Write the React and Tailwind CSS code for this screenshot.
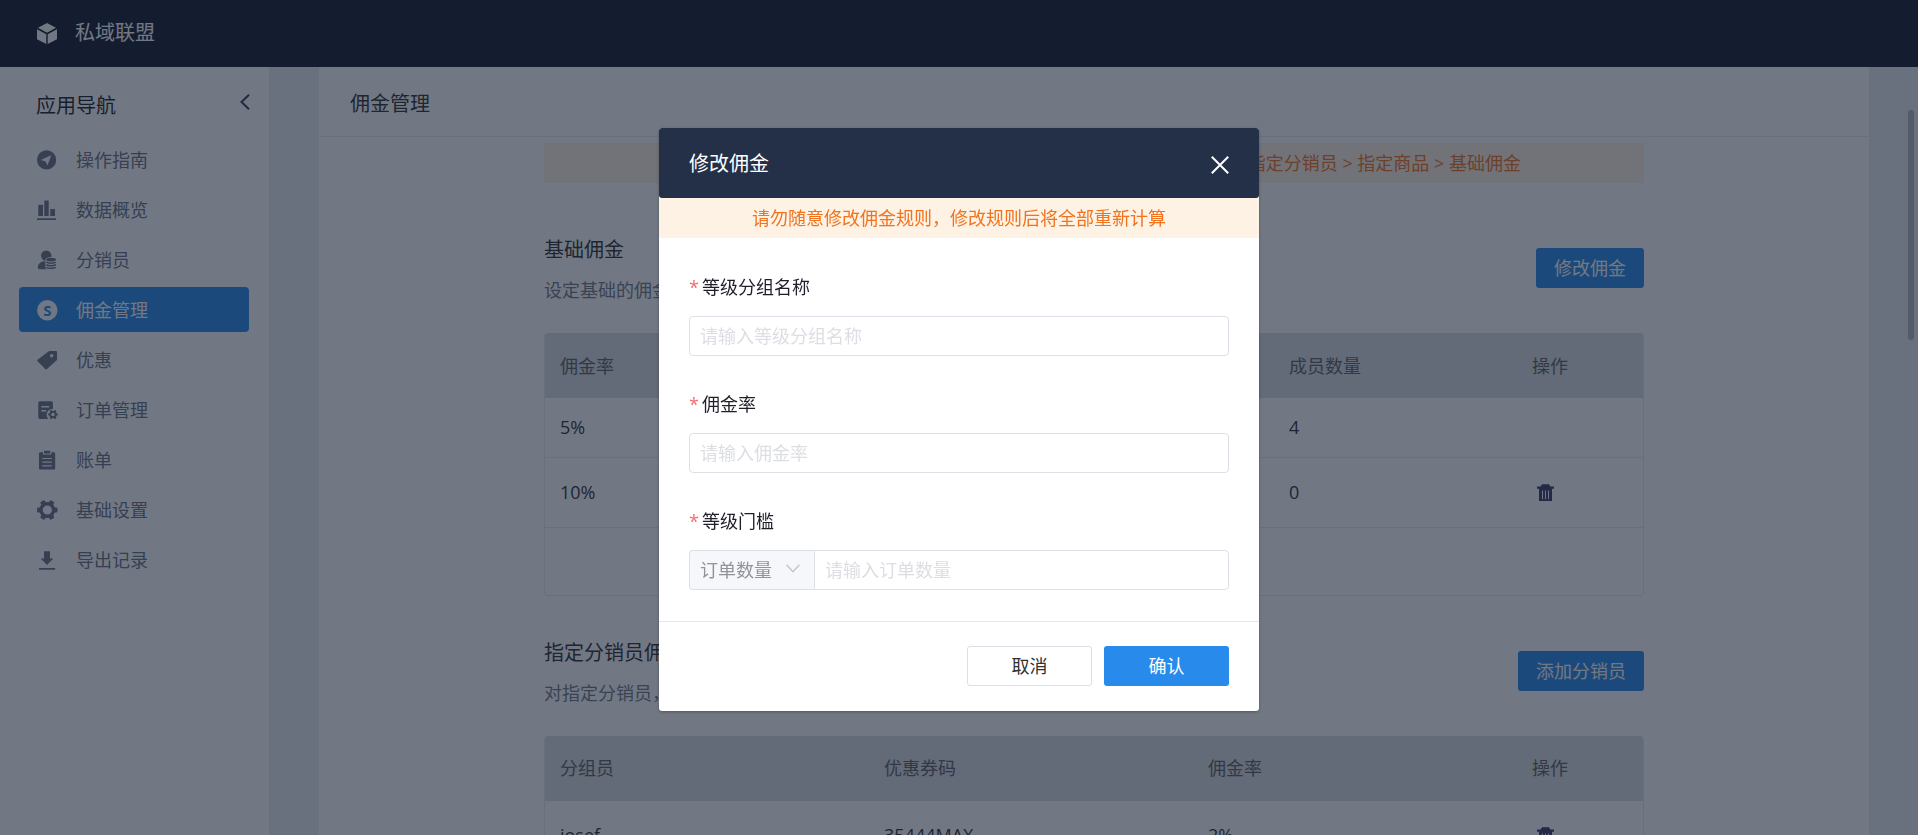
import { useState } from "react";

const icons = {
  guide: (
    <path
      fillRule="evenodd"
      d="M9.6 0.3a9.6 9.6 0 1 0 0 19.2 9.6 9.6 0 0 0 0-19.2zM14.3 5.2 10.4 15.6 8.6 11.6 3.8 10z"
    />
  ),
  chart: (
    <path d="M1.3 4.7H6V16H1.3zM7.3 .4h4.4V16H7.3zM13.3 9H18v7h-4.7zM0 18.2h19V20H0z" />
  ),
  member: (
    <>
      <circle cx="9.2" cy="5.6" r="5.2" />
      <path d="M.8 17.6c0-3.6 2.6-6.2 6.6-6.4h3v8.1H2.3C1.2 19.3.8 18.6.8 17.6z" />
      <path d="M8.4 9.8c0-3.8 11.4-3.8 11.4 0v7.4c0 3.8-11.4 3.8-11.4 0z" fill="#fff" />
      <ellipse cx="14.1" cy="9.6" rx="4.9" ry="1.9" />
      <path
        d="M9.4 12c1.5 1.5 7.9 1.5 9.4 0M9.4 14.6c1.5 1.5 7.9 1.5 9.4 0M9.4 17.2c1.5 1.5 7.9 1.5 9.4 0"
        fill="none"
        stroke="currentColor"
        strokeWidth="1.5"
      />
    </>
  ),
  commission: (
    <>
      <circle cx="10.3" cy="10.3" r="10.2" />
      <text
        x="10.3"
        y="15.6"
        textAnchor="middle"
        className="fill-[#288bec] font-['Noto_Sans'] text-[15px] font-bold"
      >
        S
      </text>
    </>
  ),
  tag: (
    <path
      fillRule="evenodd"
      d="M12.6 1h6.2c.7 0 1.2.5 1.2 1.2v7.2c0 .5-.2.9-.6 1.2L9.7 19.2c-.5.4-1.1.4-1.5-.1L.6 11.2c-.5-.5-.5-1.1 0-1.5L11.4 1.5c.3-.3.7-.5 1.2-.5zM14.7 4a1.7 1.7 0 1 0 0 3.4 1.7 1.7 0 0 0 0-3.4z"
    />
  ),
  order: (
    <>
      <path
        fillRule="evenodd"
        d="M3 1.3h11.2c1 0 1.7.7 1.7 1.7v5.9c-3.6 0-6.2 2.4-6.2 5.6 0 2 .7 3.4 1.5 4.5H3c-1 0-1.7-.7-1.7-1.7V3c0-1 .7-1.7 1.7-1.7zM4.3 6v1.4h7.9V6zM4.3 10v1.4h4.8V10z"
      />
      <circle cx="16" cy="14.5" r="2.8" fill="none" stroke="currentColor" strokeWidth="2" />
      {[0, 60, 120, 180, 240, 300].map((deg) => (
        <circle key={deg} cx="20" cy="14.5" r="1" transform={`rotate(${deg} 16 14.5)`} />
      ))}
    </>
  ),
  bill: (
    <path
      fillRule="evenodd"
      d="M7.3.8h5.6c.2 0 .3.1.3.3v1.7c0 .4-.4.8-.8.8H7.8c-.4 0-.8-.4-.8-.8V1.1c0-.2.1-.3.3-.3zM3.4 2.2H6v2.4h8.2V2.2h2.6c.8 0 1.4.6 1.4 1.4v14.6c0 .8-.6 1.4-1.4 1.4H3.4c-.8 0-1.4-.6-1.4-1.4V3.6c0-.8.6-1.4 1.4-1.4zM5.3 7.9v1.2h9.5V7.9zM5.3 11.6v1.2h9.5v-1.2zM5.3 15.3v1.2h9.5v-1.2z"
    />
  ),
  setting: (
    <>
      <circle cx="10.3" cy="10" r="6.3" fill="none" stroke="currentColor" strokeWidth="3.4" />
      {[0, 60, 120, 180, 240, 300].map((deg) => (
        <rect
          key={deg}
          x="16"
          y="7.5"
          width="4.5"
          height="5"
          rx="1.2"
          transform={`rotate(${deg} 10.3 10)`}
        />
      ))}
    </>
  ),
  download: (
    <path d="M7 1.3h6v7.3h3.4L10 15 3.6 8.6H7zM2 18.1h16.2v1.7H2z" />
  ),
};

const navItems = [
  { name: "操作指南", icon: "guide" },
  { name: "数据概览", icon: "chart" },
  { name: "分销员", icon: "member" },
  { name: "佣金管理", icon: "commission" },
  { name: "优惠", icon: "tag" },
  { name: "订单管理", icon: "order" },
  { name: "账单", icon: "bill" },
  { name: "基础设置", icon: "setting" },
  { name: "导出记录", icon: "download" },
];

const TrashButton = () => (
  <button type="button" aria-label="删除" className="ml-[5px] block">
    <svg viewBox="0 0 17 17" className="h-[17px] w-[17px] fill-[#3a3a66]">
      <path
        fillRule="evenodd"
        d="M5 .2h7l1.3 2.3H17v2.3h-2V17H2V4.8H0V2.5h3.7zM5 6.5v8.7h1V6.5zM8 6.5v8.7h1V6.5zM11 6.5v8.7h1V6.5z"
      />
    </svg>
  </button>
);

const SectionHead = ({ title, desc, action }) => (
  <div className="flex items-center justify-between">
    <div>
      <h2 className="text-xl leading-9 text-[#303133]">{title}</h2>
      <p className="mt-2 text-lg leading-7 text-[#73788a]">{desc}</p>
    </div>
    <button type="button" className="h-10 rounded-[3px] bg-[#288bec] px-[18px] text-lg text-white">
      {action}
    </button>
  </div>
);

const Th = ({ children, className }) => (
  <th className={`px-[15px] text-left font-normal text-[#606266] ${className || ""}`}>{children}</th>
);

const Field = ({ id, label, children }) => (
  <div>
    <label htmlFor={id} className="mb-[14px] flex gap-[3px] text-lg leading-[30px] text-[#1f1f2b]">
      <span className="text-[#f56c6c]">*</span>
      {label}
    </label>
    {children}
  </div>
);

const inputStyle =
  "h-10 w-full border border-[#dcdfe6] bg-white px-[10px] text-lg text-[#303133] outline-none placeholder:text-[#dcdee4]";

const Sidebar = () => (
  <aside className="w-[269px] shrink-0 bg-white">
    <div className="flex h-[70px] items-center justify-between pr-[19px] pl-9">
      <h2 className="pt-2 text-xl text-[#1f1f2b]">应用导航</h2>
      <button type="button" aria-label="收起">
        <svg viewBox="0 0 10 16" className="h-4 w-[10px] fill-none stroke-[#3a3a5c] stroke-2">
          <path d="M9 .8 1.5 8 9 15.2" />
        </svg>
      </button>
    </div>
    <nav className="flex flex-col gap-[5px] pr-5 pl-[19px]">
      {navItems.map((item) => (
        <a
          key={item.name}
          href="#"
          className={`flex h-[45px] items-center gap-[18px] rounded pt-px pl-[18px] text-lg ${
            item.icon === "commission" ? "bg-[#288bec] text-white" : "text-[#6b7085]"
          }`}
        >
          <svg viewBox="0 0 21 21" className="h-[21px] w-[21px] fill-current">
            {icons[item.icon]}
          </svg>
          {item.name}
        </a>
      ))}
    </nav>
  </aside>
);

const Content = () => (
  <main className="relative flex-1 overflow-hidden bg-[#ebeef3] pr-[49px] pl-[50px]">
    <div className="min-h-full bg-white">
      <div className="flex h-[70px] items-center border-b border-[#e8eaf0] px-[31px]">
        <h1 className="pt-1 text-xl text-[#303133]">佣金管理</h1>
      </div>
      <div className="mx-auto mt-[6px] max-w-[1100px]">
        <p className="h-10 bg-[#fdf2e4] pr-[123px] text-right text-lg leading-10 text-[#f2731f]">
          指定分销员 &gt; 指定商品 &gt; 基础佣金
        </p>

        <section className="mt-[49px]">
          <SectionHead title="基础佣金" desc="设定基础的佣金" action="修改佣金" />
          <div className="mt-[29px] overflow-hidden rounded border border-t-0 border-[#e8eaf0]">
            <table className="w-full table-fixed text-lg text-[#303133]">
              <thead>
                <tr className="h-[65px] bg-[#dadce4]">
                  <Th>佣金率</Th>
                  <Th />
                  <Th />
                  <Th>成员数量</Th>
                  <Th className="w-[126px]">操作</Th>
                </tr>
              </thead>
              <tbody>
                <tr className="h-[59px] border-b border-[#e8eaf0]">
                  <td className="px-[15px]">5%</td>
                  <td />
                  <td />
                  <td className="px-[15px]">4</td>
                  <td />
                </tr>
                <tr className="h-[70px] border-b border-[#e8eaf0]">
                  <td className="px-[15px]">10%</td>
                  <td />
                  <td />
                  <td className="px-[15px]">0</td>
                  <td className="px-[15px]">
                    <TrashButton />
                  </td>
                </tr>
              </tbody>
            </table>
            <div className="h-[67px]" />
          </div>
        </section>

        <section className="mt-[39px]">
          <SectionHead title="指定分销员佣金" desc="对指定分销员&#xff0c;" action="添加分销员" />
          <div className="mt-[29px] overflow-hidden rounded border border-t-0 border-[#e8eaf0]">
            <table className="w-full table-fixed text-lg text-[#303133]">
              <thead>
                <tr className="h-[65px] bg-[#dadce4]">
                  <Th>分组员</Th>
                  <Th>优惠券码</Th>
                  <Th>佣金率</Th>
                  <Th className="w-[126px]">操作</Th>
                </tr>
              </thead>
              <tbody>
                <tr className="h-[70px] border-b border-[#e8eaf0]">
                  <td className="px-[15px]">josef</td>
                  <td className="px-[15px]">35444MAX</td>
                  <td className="px-[15px]">2%</td>
                  <td className="px-[15px]">
                    <TrashButton />
                  </td>
                </tr>
              </tbody>
            </table>
          </div>
        </section>
      </div>
    </div>
    {/* scroll thumb */}
    <div className="absolute top-[43px] right-1 h-[230px] w-[6px] rounded-full bg-[#b4b6bc]" />
  </main>
);

const CommissionDialog = ({ onClose }) => {
  const [type, setType] = useState("order");

  return (
    <div className="fixed inset-0 flex items-start justify-center bg-[#141e30]/60 pt-32">
      <div
        role="dialog"
        aria-labelledby="dialog-title"
        className="w-[600px] max-w-full rounded-[3px] bg-white shadow-[0_1px_3px_rgba(0,0,0,0.3)]"
      >
        <div className="flex h-[70px] items-center justify-between rounded-[3px] bg-[#243048] px-[30px]">
          <h2 id="dialog-title" className="pt-[2px] text-xl text-white">
            修改佣金
          </h2>
          <button type="button" aria-label="关闭" onClick={onClose} className="pt-1">
            <svg viewBox="0 0 18 18" className="h-[18px] w-[18px] fill-none stroke-white stroke-2">
              <path d="m.8.8 16.4 16.4M17.2.8.8 17.2" />
            </svg>
          </button>
        </div>
        <p className="h-10 bg-[#fdf2e4] text-center text-lg leading-10 text-[#f2731f]">
          请勿随意修改佣金规则&#xff0c;修改规则后将全部重新计算
        </p>

        <form onSubmit={(e) => e.preventDefault()}>
          <div className="flex flex-col gap-[33px] px-[30px] pt-[34px] pb-[31px]">
            <Field id="group-name" label="等级分组名称">
              <input id="group-name" type="text" placeholder="请输入等级分组名称" className={`${inputStyle} rounded`} />
            </Field>
            <Field id="rate" label="佣金率">
              <input id="rate" type="text" placeholder="请输入佣金率" className={`${inputStyle} rounded`} />
            </Field>
            <Field id="threshold" label="等级门槛">
              <div className="flex">
                <div className="relative shrink-0">
                  <select
                    aria-label="门槛类型"
                    value={type}
                    onChange={(e) => setType(e.target.value)}
                    className="h-10 w-[125px] appearance-none rounded-l border border-r-0 border-[#dcdfe6] bg-[#f5f7fa] px-[10px] text-lg text-[#909399]"
                  >
                    <option value="order">订单数量</option>
                  </select>
                  <svg
                    viewBox="0 0 14 9"
                    className="pointer-events-none absolute top-[14px] right-[14px] h-[9px] w-[14px] fill-none stroke-[#c0c4cc]"
                  >
                    <path d="m.6.8 6.4 7 6.4-7" strokeWidth="1.3" />
                  </svg>
                </div>
                <input id="threshold" type="text" placeholder="请输入订单数量" className={`${inputStyle} rounded-r`} />
              </div>
            </Field>
          </div>
          <div className="flex justify-end gap-3 border-t border-[#e4e5f0] px-[30px] pt-6 pb-[25px]">
            <button
              type="button"
              onClick={onClose}
              className="h-10 w-[125px] rounded-[3px] border border-[#dcdfe6] bg-white text-lg text-[#303133]"
            >
              取消
            </button>
            <button type="submit" className="h-10 w-[125px] rounded-[3px] bg-[#288bec] text-lg text-white">
              确认
            </button>
          </div>
        </form>
      </div>
    </div>
  );
};

export default function App() {
  const [open, setOpen] = useState(true);

  return (
    <div
      lang="zh-CN"
      className="flex h-screen flex-col overflow-hidden font-['Open_Sans','Noto_Sans_CJK_SC',sans-serif]"
    >
      <header className="flex h-[67px] shrink-0 items-center gap-[18px] bg-[#141930] px-[37px] pb-px text-white">
        <svg viewBox="0 0 20 21" className="h-[21px] w-5 fill-current">
          <path d="M10 0 19 4.8 10 9.700 1 4.800zM0 6.300l9.300 5V21L0 16.200zM20 6.300l-9.300 5V21l9.300-4.800z" />
        </svg>
        <span className="text-xl">私域联盟</span>
      </header>
      <div className="flex min-h-0 flex-1">
        <Sidebar />
        <Content />
      </div>
      {open && <CommissionDialog onClose={() => setOpen(false)} />}
    </div>
  );
}
